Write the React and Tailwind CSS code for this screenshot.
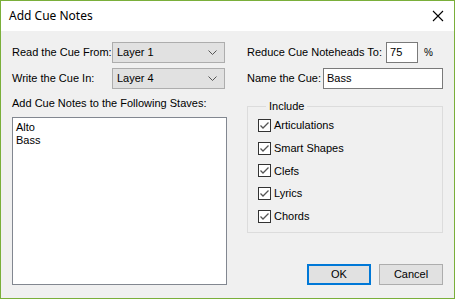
import React from 'react';

const font = { fontFamily: '"Liberation Sans", Arial, sans-serif' };

function Combo({ value }) {
  return (
    <div className="w-[113px] h-[21px] bg-[#e1e1e1] border border-[#adadad] flex items-center pl-[4px] pr-[7px] text-[11px] text-black">
      <span className="flex-1">{value}</span>
      <svg width="9" height="5" viewBox="0 0 9 5" className="shrink-0">
        <path d="M0.5 0.5 L4.5 4.5 L8.5 0.5" fill="none" stroke="#555" strokeWidth="1" />
      </svg>
    </div>
  );
}

function Check({ label }) {
  return (
    <div className="flex items-center h-[22.75px]">
      <div className="w-[13px] h-[13px] border border-[#333] bg-white flex items-center justify-center shrink-0">
        <svg width="11" height="11" viewBox="0 0 11 11">
          <path d="M1.5 5.5 L4 8 L9.5 2.5" fill="none" stroke="#555" strokeWidth="1.3" />
        </svg>
      </div>
      <span className="ml-[3px] text-[11px] text-black">{label}</span>
    </div>
  );
}

function Button({ children, primary }) {
  return (
    <div
      className={`w-[64px] h-[21px] bg-[#e1e1e1] flex items-center justify-center text-[11px] text-black ${
        primary ? 'border-2 border-[#0078d7]' : 'border border-[#adadad]'
      }`}
    >
      {children}
    </div>
  );
}

export default function App() {
  return (
    <div className="w-[455px] h-[299px] border border-[#7aaf3a] bg-[#f0f0f0] flex flex-col select-none" style={font}>
      {/* title bar */}
      <div className="h-[30px] bg-white flex items-center shrink-0">
        <span className="ml-[8px] text-[12px] text-black" style={{ fontFamily: '"Noto Sans", "Open Sans", sans-serif' }}>
          Add Cue Notes
        </span>
        <svg width="12" height="12" viewBox="0 0 12 12" className="ml-auto mr-[10px]">
          <path d="M1 1 L11 11 M11 1 L1 11" stroke="#000" strokeWidth="1.1" />
        </svg>
      </div>

      <div className="flex-1 flex pl-[11px] pt-[11px]">
        {/* left column */}
        <div className="w-[215px] flex flex-col">
          <div className="flex items-center">
            <span className="w-[100px] text-[11px] text-black">Read the Cue From:</span>
            <Combo value="Layer 1" />
          </div>
          <div className="flex items-center mt-[5px]">
            <span className="w-[100px] text-[11px] text-black">Write the Cue In:</span>
            <Combo value="Layer 4" />
          </div>
          <div className="mt-[8px] text-[11px] text-black leading-[13px]">Add Cue Notes to the Following Staves:</div>
          <div className="mt-[7px] w-[215px] h-[168px] bg-white border border-[#828790] pt-[3px] pl-[3px] text-[11px] text-black leading-[13px]">
            <div>Alto</div>
            <div>Bass</div>
          </div>
        </div>

        {/* right column */}
        <div className="ml-[20px] w-[196px] flex flex-col">
          <div className="flex items-center h-[21px]">
            <span className="text-[11px] text-black">Reduce Cue Noteheads To:</span>
            <div className="ml-auto w-[32px] h-[21px] bg-white border border-[#7a7a7a] flex items-center pl-[3px] text-[11px] text-black">75</div>
            <span className="ml-[6px] mr-[10px] text-[10px] text-black">%</span>
          </div>
          <div className="flex items-center mt-[5px] h-[21px]">
            <span className="text-[11px] text-black">Name the Cue:</span>
            <div className="ml-auto w-[120px] h-[21px] bg-white border border-[#7a7a7a] flex items-center pl-[3px] text-[11px] text-black">Bass</div>
          </div>
          <fieldset className="mt-[11px] border border-[#dcdcdc] pl-[10px] pb-[8px] pt-[1px] h-[133px]">
            <legend className="ml-[8px] px-[3px] text-[11px] text-black leading-[13px]">Include</legend>
            <Check label="Articulations" />
            <Check label="Smart Shapes" />
            <Check label="Clefs" />
            <Check label="Lyrics" />
            <Check label="Chords" />
          </fieldset>
          <div className="mt-[31px] flex justify-end gap-[8px]">
            <Button primary>OK</Button>
            <Button>Cancel</Button>
          </div>
        </div>
      </div>
    </div>
  );
}
